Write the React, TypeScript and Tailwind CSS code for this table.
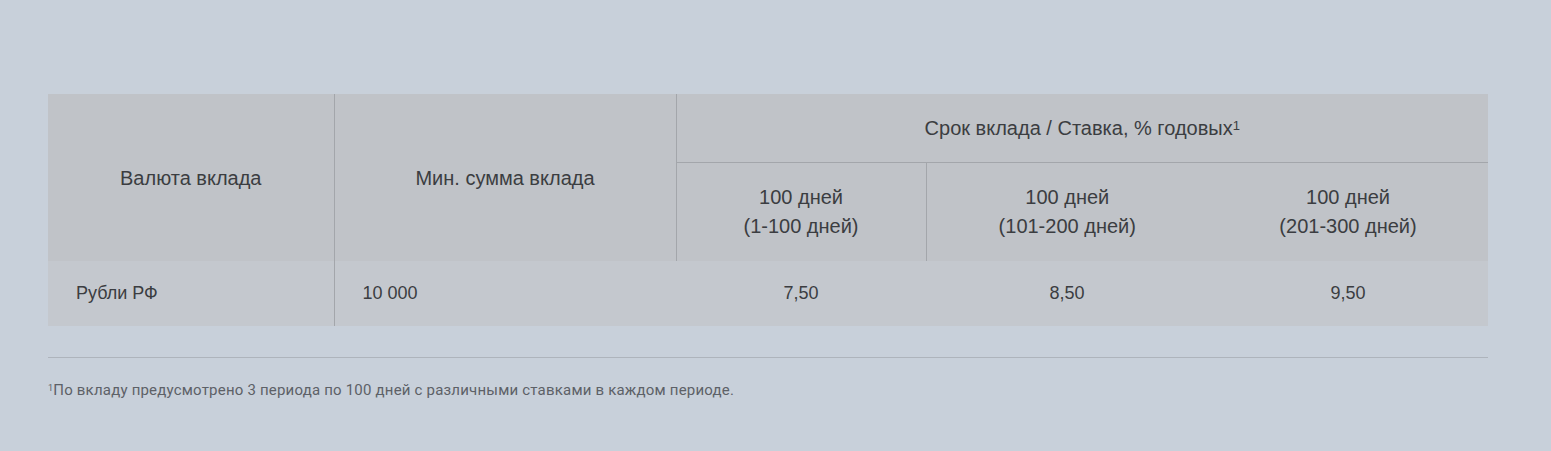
export default function App() {
  const rates = ['7,50', '8,50', '9,50']
  const periods = ['(1-100 дней)', '(101-200 дней)', '(201-300 дней)']

  return (
    <div className="min-h-[451px] w-full bg-[#c8d0da] pt-[94px] px-[48px] font-['Liberation_Sans',Arial,sans-serif] text-[#3b3d41]">
      <table className="w-[1440px] table-fixed border-collapse">
        <colgroup>
          <col className="w-[286px]" />
          <col className="w-[342px]" />
          <col className="w-[250px]" />
          <col className="w-[282px]" />
          <col className="w-[280px]" />
        </colgroup>
        <thead className="bg-[#c0c3c8]">
          <tr className="h-[68px]">
            <th rowSpan={2} className="border-r border-[#a3a6ab] text-center text-[20px] font-normal">
              Валюта вклада
            </th>
            <th rowSpan={2} className="border-r border-[#a3a6ab] text-center text-[20px] font-normal">
              Мин. сумма вклада
            </th>
            <th colSpan={3} className="border-b border-[#a3a6ab] text-center text-[20px] font-normal">
              Срок вклада / Ставка, % годовых
              <sup className="text-[13px] relative -top-[5px]">1</sup>
            </th>
          </tr>
          <tr className="h-[99px]">
            {periods.map((p, i) => (
              <th
                key={p}
                className={`text-center text-[20px] font-normal leading-[29px] ${i === 0 ? 'border-r border-[#a3a6ab]' : ''}`}
              >
                100 дней
                <br />
                {p}
              </th>
            ))}
          </tr>
        </thead>
        <tbody className="bg-[#c4c8ce]">
          <tr className="h-[65px] text-[18px]">
            <td className="border-r border-[#a3a6ab] pl-[28px]">Рубли РФ</td>
            <td className="pl-[28px]">10 000</td>
            {rates.map((r) => (
              <td key={r} className="text-center">
                {r}
              </td>
            ))}
          </tr>
        </tbody>
      </table>

      <div className="mt-[31px] w-[1440px] border-t border-[#aeb4bc]" />

      <p className="mt-[21px] text-[15px] text-[#5d6167] font-['Roboto',sans-serif] tracking-[0.2px]">
        <sup className="text-[9px] relative -top-[4px]">1</sup>
        По вкладу предусмотрено 3 периода по 100 дней с различными ставками в каждом периоде.
      </p>
    </div>
  )
}
